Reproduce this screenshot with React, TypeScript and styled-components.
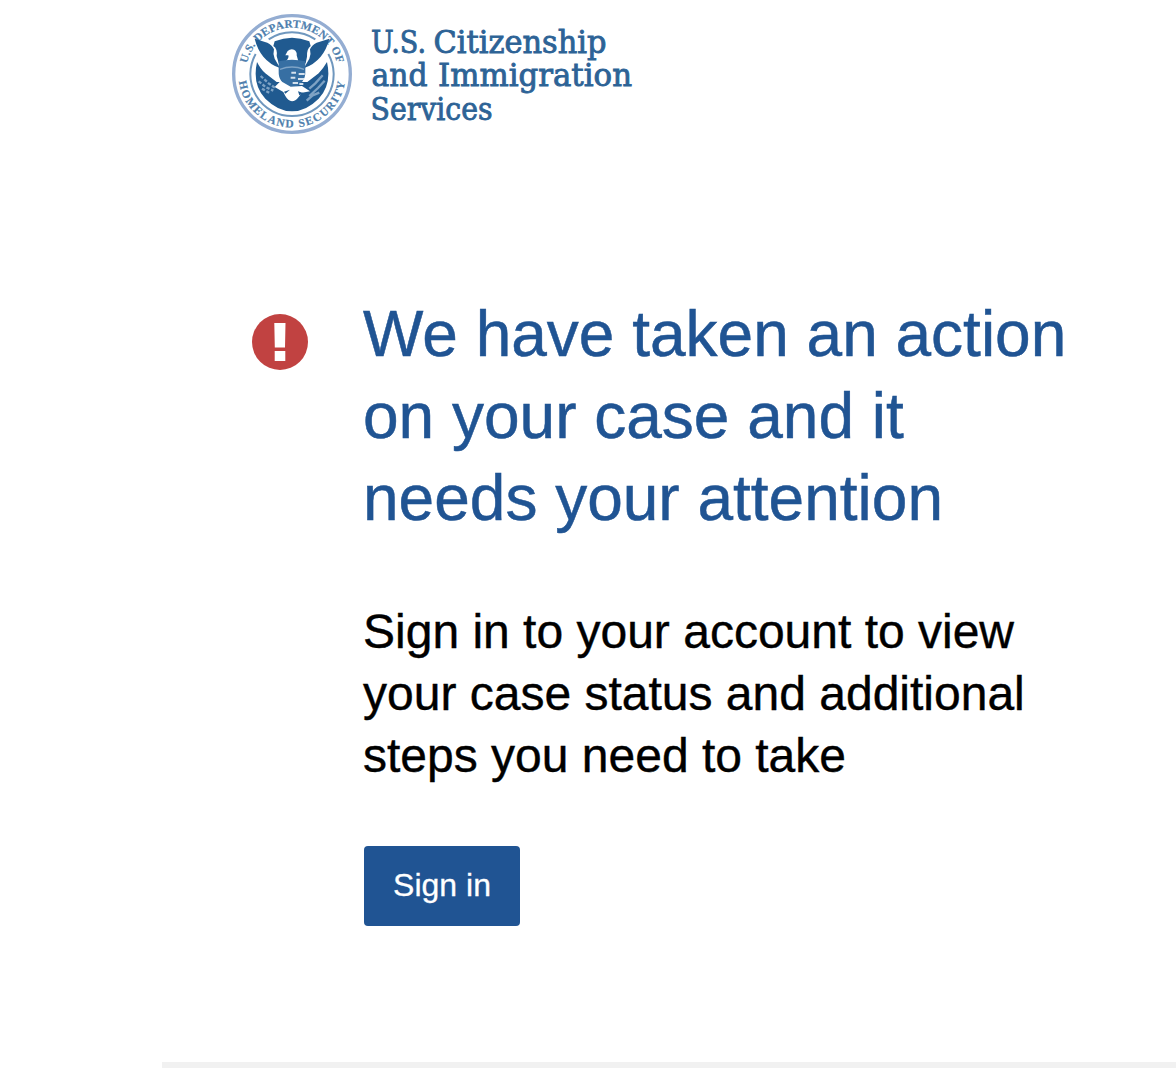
import React from 'react'
import styled, { createGlobalStyle } from 'styled-components'

const GlobalStyle = createGlobalStyle`
  body {
    margin: 0;
    background: #fff;
    font-family: "Liberation Sans", Arial, sans-serif;
  }
`

const Page = styled.div`
  box-sizing: border-box;
  min-height: 1092px;
  padding: 14px 0 24px 162px;
  display: flex;
  flex-direction: column;
  overflow: hidden;
`

const Header = styled.header`
  display: flex;
  gap: 16px;
  height: 120px;
  margin-left: 70px;
`

const Notice = styled.main`
  display: flex;
  align-items: flex-start;
  gap: 55px;
  margin: 159px 0 0 90px;
`

const AlertIcon = styled.svg`
  flex: none;
  width: 56px;
  height: 56px;
  margin-top: 21px;
`

const Content = styled.div`
  width: 720px;
`

const Title = styled.h1`
  margin: 0;
  font-size: 64px;
  font-weight: 400;
  line-height: 82px;
  color: #205493;
  -webkit-text-stroke: 0.5px #205493;
`

const Message = styled.p`
  margin: 62px 0 0;
  font-size: 48px;
  line-height: 62px;
  color: #000;
  -webkit-text-stroke: 0.4px #000;
`

const SignInButton = styled.button`
  display: block;
  width: 156px;
  height: 80px;
  margin: 59px 0 0 1px;
  padding: 0 0 2px;
  border: 0;
  border-radius: 4px;
  background: #205493;
  color: #fff;
  font-family: inherit;
  font-size: 32px;
  cursor: pointer;
  -webkit-text-stroke: 0.3px #fff;
`

const Divider = styled.hr`
  width: 100%;
  height: 6px;
  margin: auto 0 0;
  border: 0;
  background: #f1f1f1;
`

const Seal: React.FC = () => (
  <svg width="120" height="120" viewBox="30 30 360 360" role="img" aria-label="Department of Homeland Security">
    <defs>
      <path id="sealTop" d="M74.6 178.7 A139 139 0 0 1 345.4 178.7" />
      <path id="sealBottom" d="M50.6 232.4 A161 161 0 0 0 369.4 232.4" />
    </defs>
    <circle cx="210" cy="210" r="175" fill="#fff" stroke="#94add2" strokeWidth="10" />
    <g fill="#4f7fae" stroke="#4f7fae" strokeWidth="0.6" fontFamily='"Liberation Serif", serif' fontWeight="700" fontSize="34">
      <text>
        <textPath href="#sealTop" textLength="372" lengthAdjust="spacing">U.S. DEPARTMENT OF</textPath>
      </text>
      <text>
        <textPath href="#sealBottom" textLength="458" lengthAdjust="spacing">HOMELAND SECURITY</textPath>
      </text>
    </g>

    {/* inner rings, open where the wing tips cross them */}
    <g fill="none" stroke="#6f97be" strokeWidth="6">
      <path d="M140 106 A125 125 0 0 1 280 106" />
      <path d="M101 150 A125 125 0 1 0 319 150" />
    </g>

    {/* body and lower feathers */}
    <path d="M105 174 Q90 242 130 284 Q168 322 210 322 Q252 322 290 284 Q330 242 315 174 Q302 196 290 208 L256 234 H164 L130 208 Q116 196 105 174Z" fill="#205a90" />
    {/* shield background behind the head */}
    <path d="M158 112 Q210 90 262 112 L266 126 Q254 134 255 158 L251 178 H170 L164 156 Q167 134 154 126Z" fill="#205a90" />
    {/* raised wings */}
    <path d="M98 104 L136 116 Q150 122 156 136 Q152 150 158 164 L174 192 Q144 182 124 158 Q106 136 98 104Z" fill="#205a90" />
    <path d="M322 104 L284 116 Q270 122 264 136 Q268 150 262 164 L246 192 Q276 182 296 158 Q314 136 322 104Z" fill="#205a90" />
    {/* head */}
    <path d="M190 154 L197 141 Q206 133 216 137 Q226 143 224 154 L229 172 H191 Q202 162 199 154Z" fill="#fff" />
    {/* shield */}
    <path d="M170 172 Q210 162 250 172 V202 Q252 238 210 254 Q168 238 170 202Z" fill="#376fa3" />
    <path d="M174 196 Q210 182 246 196" fill="none" stroke="#7fa4c7" strokeWidth="4" />
    <g fill="none" stroke="#d5e1ed" strokeWidth="6">
      <path d="M208 206 H222 M230 210 H248" />
      <path d="M206 221 H220 M228 225 H246" />
      <path d="M212 237 H228 M232 240 H244" />
    </g>
    {/* legs and tail */}
    <path d="M158 249 L176 231 L206 248 L240 246 L264 262 L240 266 L230 279 Q220 292 210 292 Q198 290 190 276 L184 264Z" fill="#fff" />
    <path d="M186 263 L204 257 L190 269Z M228 262 L246 268 L232 274Z" fill="#205a90" />
    {/* olive branch and arrows */}
    <g fill="none" stroke="#7ea2c4" strokeWidth="7">
      <path d="M116 216 L140 238 L160 252 M110 232 L132 250 L154 260 M120 254 L144 268" strokeDasharray="10 5" />
      <path d="M302 214 L280 238 L262 254 M308 230 L288 252 L262 276 M292 266 L272 274 L254 290" />
    </g>
  </svg>
)

const wordmark = [
  { text: 'U.S.', x: 3, y: 39.2, width: 55 },
  { text: 'Citizenship', x: 65.5, y: 39.2, width: 173 },
  { text: 'and', x: 3.5, y: 72.4, width: 56 },
  { text: 'Immigration', x: 70, y: 72.4, width: 194 },
  { text: 'Services', x: 2.5, y: 106, width: 122 },
]

const Wordmark: React.FC = () => (
  <svg
    width="276"
    height="120"
    viewBox="0 0 276 120"
    fontFamily='"DejaVu Serif", serif'
    fontSize="32"
    fill="#2d6396"
    stroke="#2d6396"
    strokeWidth="0.9"
  >
    {wordmark.map(word => (
      <text key={word.text} x={word.x} y={word.y} textLength={word.width} lengthAdjust="spacingAndGlyphs">
        {word.text}
      </text>
    ))}
  </svg>
)

const App: React.FC = () => {
  return (
    <>
      <GlobalStyle />
      <Page>
        <Header>
          <Seal />
          <Wordmark />
        </Header>
        <Notice>
          <AlertIcon viewBox="0 0 56 56">
            <circle cx="28" cy="28" r="28" fill="#c14241" />
            <path d="M22.3 9h11.2l-.5 24.5h-10.2z M22.7 37h10.6v10H22.7z" fill="#fff" />
          </AlertIcon>
          <Content>
            <Title>We have taken an action on your case and it needs your attention</Title>
            <Message>Sign in to your account to view your case status and additional steps you need to take</Message>
            <SignInButton>Sign in</SignInButton>
          </Content>
        </Notice>
        <Divider />
      </Page>
    </>
  )
}

export default App
